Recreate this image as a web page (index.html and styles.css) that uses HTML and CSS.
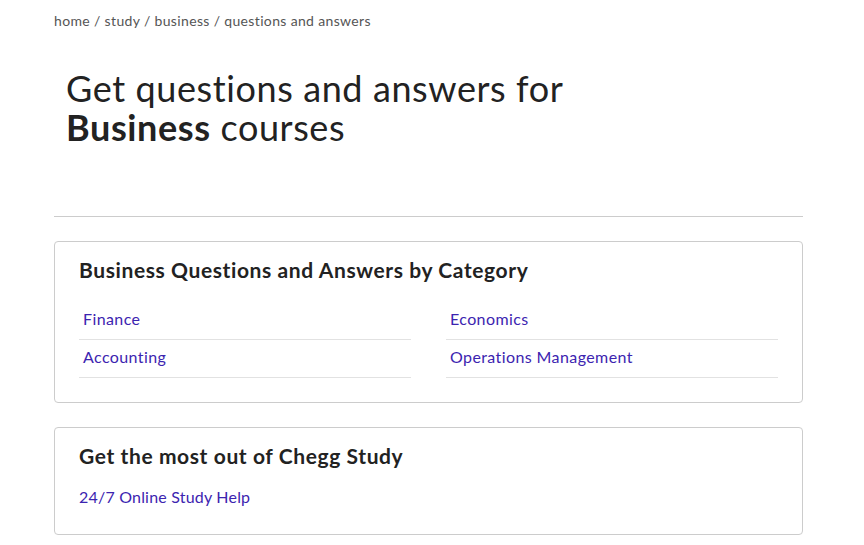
FILE: index.html
```html
<!DOCTYPE html>
<html lang="en">
<head>
<meta charset="utf-8">
<link rel="stylesheet" href="styles.css">
</head>
<body>
<div class="page">
  <nav class="crumbs">
    <a href="#">home</a> / <a href="#">study</a> / <a href="#">business</a> / <span>questions and answers</span>
  </nav>
  <h1 class="hero"><span class="hero-line">Get questions and answers for</span><span class="hero-line"><strong>Business</strong> courses</span></h1>
  <hr class="rule">
  <section class="card">
    <h2 class="card-title">Business Questions and Answers by Category</h2>
    <ul class="cat-grid">
      <li><a href="#">Finance</a></li>
      <li><a href="#">Economics</a></li>
      <li><a href="#">Accounting</a></li>
      <li><a href="#">Operations Management</a></li>
    </ul>
  </section>
  <section class="card card-small">
    <h2 class="card-title">Get the most out of Chegg Study</h2>
    <a class="plain-link" href="#">24/7 Online Study Help</a>
  </section>
</div>
</body>
</html>
```
FILE: styles.css
```css
* { box-sizing: border-box; }
html, body { margin: 0; padding: 0; background: #fff; }
body { font-family: Lato, "Open Sans", sans-serif; color: #222; }
.page { padding: 12px 61px 0 54px; }
.crumbs { font-size: 14px; letter-spacing: 0.35px; color: #555; line-height: 18px; }
.crumbs a { color: #555; text-decoration: none; }
.hero {
  margin: 39px 0 0 12px;
  font-size: 36px;
  letter-spacing: 0.6px;
  font-weight: 400;
  line-height: 39px;
  color: #222;
}
.hero-line { display: block; }
.hero strong { font-weight: 700; }
.rule { margin: 69px 0 24px; border: 0; border-top: 1px solid #ccc; }
.card {
  border: 1px solid #ccc;
  border-radius: 4px;
  padding: 14px 24px 24px;
  margin-bottom: 24px;
}
.card-title { margin: 0; font-size: 21px; letter-spacing: 0.6px; font-weight: 700; line-height: 28px; color: #222; }
.cat-grid {
  list-style: none; margin: 18px 0 0; padding: 0;
  display: grid; grid-template-columns: 1fr 1fr; column-gap: 35px;
}
.cat-grid li { border-bottom: 1px solid #e2e2e2; padding: 7px 4px 10px; line-height: 20px; }
.cat-grid a, .plain-link { color: #3c24b0; text-decoration: none; font-size: 16px; letter-spacing: 0.4px; }
.card-small { padding-top: 14px; padding-bottom: 27px; }
.plain-link { display: inline-block; margin-top: 17px; line-height: 20px; letter-spacing: 0.2px; }
```
